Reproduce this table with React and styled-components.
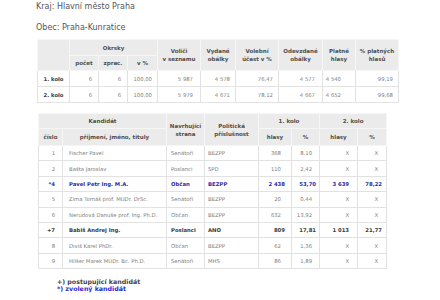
import React from "react";
import styled, { createGlobalStyle } from "styled-components";

const GlobalStyle = createGlobalStyle`
  html, body {
    margin: 0;
    padding: 0;
    background: #ffffff;
  }
  body {
    font-family: "DejaVu Sans", Verdana, sans-serif;
  }
`;

const souhrn = [
  { kolo: "1. kolo", pocet: "6", zprac: "6", proc: "100,00", volici: "5 987", vydane: "4 578", ucast: "76,47", odevzdane: "4 577", platne: "4 540", platnychProc: "99,19" },
  { kolo: "2. kolo", pocet: "6", zprac: "6", proc: "100,00", volici: "5 979", vydane: "4 671", ucast: "78,12", odevzdane: "4 667", platne: "4 652", platnychProc: "99,68" },
];

const kandidati = [
  { cislo: "1", jmeno: "Fischer Pavel", strana: "Senátoři", prislusnost: "BEZPP", h1: "368", p1: "8,10", h2: "X", p2: "X" },
  { cislo: "2", jmeno: "Bašta Jaroslav", strana: "Poslanci", prislusnost: "SPD", h1: "110", p1: "2,42", h2: "X", p2: "X" },
  { cislo: "*4", jmeno: "Pavel Petr Ing. M.A.", strana: "Občan", prislusnost: "BEZPP", h1: "2 438", p1: "53,70", h2: "3 639", p2: "78,22", stav: "zvoleny" },
  { cislo: "5", jmeno: "Zima Tomáš prof. MUDr. DrSc.", strana: "Senátoři", prislusnost: "BEZPP", h1: "20", p1: "0,44", h2: "X", p2: "X" },
  { cislo: "6", jmeno: "Nerudová Danuše prof. Ing. Ph.D.", strana: "Občan", prislusnost: "BEZPP", h1: "632", p1: "13,92", h2: "X", p2: "X" },
  { cislo: "+7", jmeno: "Babiš Andrej Ing.", strana: "Poslanci", prislusnost: "ANO", h1: "809", p1: "17,81", h2: "1 013", p2: "21,77", stav: "postupujici" },
  { cislo: "8", jmeno: "Diviš Karel PhDr.", strana: "Občan", prislusnost: "BEZPP", h1: "62", p1: "1,36", h2: "X", p2: "X" },
  { cislo: "9", jmeno: "Hilšer Marek MUDr. Bc. Ph.D.", strana: "Senátoři", prislusnost: "MHS", h1: "86", p1: "1,89", h2: "X", p2: "X" },
];

export default function App() {
  return (
    <Page>
      <GlobalStyle />
      <Heading>Kraj: Hlavní město Praha</Heading>
      <Heading $gap>Obec: Praha-Kunratice</Heading>

      <SummaryTable>
        <colgroup>
          <col width="32" />
          <col width="29" />
          <col width="29" />
          <col width="30" />
          <col width="43" />
          <col width="35" />
          <col width="43" />
          <col width="44" />
          <col width="33" />
          <col width="43" />
        </colgroup>
        <thead>
          <HeadRow $h={16}>
            <Th rowSpan={2}></Th>
            <Th colSpan={3}>Okrsky</Th>
            <Th rowSpan={2}>Voliči<br />v seznamu</Th>
            <Th rowSpan={2}>Vydané<br />obálky</Th>
            <Th rowSpan={2}>Volební<br />účast v %</Th>
            <Th rowSpan={2}>Odevzdané<br />obálky</Th>
            <Th rowSpan={2}>Platné<br />hlasy</Th>
            <Th rowSpan={2}>% platných<br />hlasů</Th>
          </HeadRow>
          <HeadRow $h={15}>
            <Th>počet</Th>
            <Th>zprac.</Th>
            <Th>v %</Th>
          </HeadRow>
        </thead>
        <tbody>
          {souhrn.map((r) => (
            <DataRow key={r.kolo} $h={16}>
              <RoundCell>{r.kolo}</RoundCell>
              <Num $pad={6}>{r.pocet}</Num>
              <Num $pad={6}>{r.zprac}</Num>
              <Num $pad={5}>{r.proc}</Num>
              <Num $pad={7}>{r.volici}</Num>
              <Num $pad={5}>{r.vydane}</Num>
              <Num $pad={5}>{r.ucast}</Num>
              <Num $pad={7}>{r.odevzdane}</Num>
              <Num $pad={14}>{r.platne}</Num>
              <Num $pad={5}>{r.platnychProc}</Num>
            </DataRow>
          ))}
        </tbody>
      </SummaryTable>

      <CandidateTable>
        <colgroup>
          <col width="24" />
          <col width="104" />
          <col width="38" />
          <col width="54" />
          <col width="33" />
          <col width="28" />
          <col width="38" />
          <col width="29" />
        </colgroup>
        <thead>
          <HeadRow $h={15}>
            <Th colSpan={2}>Kandidát</Th>
            <Th rowSpan={2}>Navrhující<br />strana</Th>
            <Th rowSpan={2}>Politická<br />příslušnost</Th>
            <Th colSpan={2}>1. kolo</Th>
            <Th colSpan={2}>2. kolo</Th>
          </HeadRow>
          <HeadRow $h={17}>
            <Th>číslo</Th>
            <Th>příjmení, jméno, tituly</Th>
            <Th>hlasy</Th>
            <Th>%</Th>
            <Th>hlasy</Th>
            <Th>%</Th>
          </HeadRow>
        </thead>
        <tbody>
          {kandidati.map((k) => (
            <DataRow key={k.cislo} $h={15.4} $stav={k.stav}>
              <Num $pad={7}>{k.cislo}</Num>
              <Text $pad={6}>{k.jmeno}</Text>
              <Text $pad={4}>{k.strana}</Text>
              <Text $pad={3}>{k.prislusnost}</Text>
              <Num $pad={k.stav ? 6 : 10}>{k.h1}</Num>
              <Num $pad={k.stav ? 3 : 7}>{k.p1}</Num>
              <Num $pad={8}>{k.h2}</Num>
              <Num $pad={k.stav ? 4 : 8}>{k.p2}</Num>
            </DataRow>
          ))}
        </tbody>
      </CandidateTable>

      <Legend>
        <LegendItem>+) postupující kandidát</LegendItem>
        <LegendItem $blue>*) zvolený kandidát</LegendItem>
      </Legend>
    </Page>
  );
}

const Page = styled.div`
  padding: 2px 0 20px 36px;
  width: 404px;
`;

const Heading = styled.div`
  font-size: 8px;
  line-height: 9px;
  color: #555555;
  margin-top: ${(p) => (p.$gap ? "12px" : "0")};
`;

const BaseTable = styled.table`
  border-collapse: collapse;
  table-layout: fixed;
  font-size: 5.3px;
  line-height: 8px;
  border: 1px solid #e2e2e2;
`;

const SummaryTable = styled(BaseTable)`
  width: 361px;
  margin: 7px 0 0 1px;
`;

const CandidateTable = styled(BaseTable)`
  width: 348px;
  margin: 10px 0 0 2px;
`;

const HeadRow = styled.tr`
  height: ${(p) => p.$h}px;
`;

const Th = styled.th`
  background: #ebebeb;
  border: 1px solid #f6f6f6;
  color: #4e4e4e;
  font-size: 5.5px;
  font-weight: bold;
  text-align: center;
  vertical-align: middle;
  padding: 0 1px;
  white-space: nowrap;
`;

const DataRow = styled.tr`
  height: ${(p) => p.$h}px;
  color: ${(p) =>
    p.$stav === "zvoleny" ? "#2b2ba6" : p.$stav === "postupujici" ? "#3a3a3a" : "#7e7e7e"};
  font-weight: ${(p) => (p.$stav ? "bold" : "normal")};
`;

const Cell = styled.td`
  border: 1px solid #e2e2e2;
  vertical-align: middle;
  white-space: nowrap;
  overflow: hidden;
`;

const RoundCell = styled(Cell)`
  text-align: center;
  font-weight: bold;
  color: #3c3c3c;
`;

const Num = styled(Cell)`
  text-align: right;
  padding: 0 ${(p) => p.$pad}px 0 0;
`;

const Text = styled(Cell)`
  text-align: left;
  padding: 0 0 0 ${(p) => p.$pad}px;
`;

const Legend = styled.div`
  margin: 9px 0 0 21px;
  font-size: 6.3px;
  line-height: 7px;
  font-weight: bold;
`;

const LegendItem = styled.div`
  color: ${(p) => (p.$blue ? "#2b2bd0" : "#444444")};
`;
